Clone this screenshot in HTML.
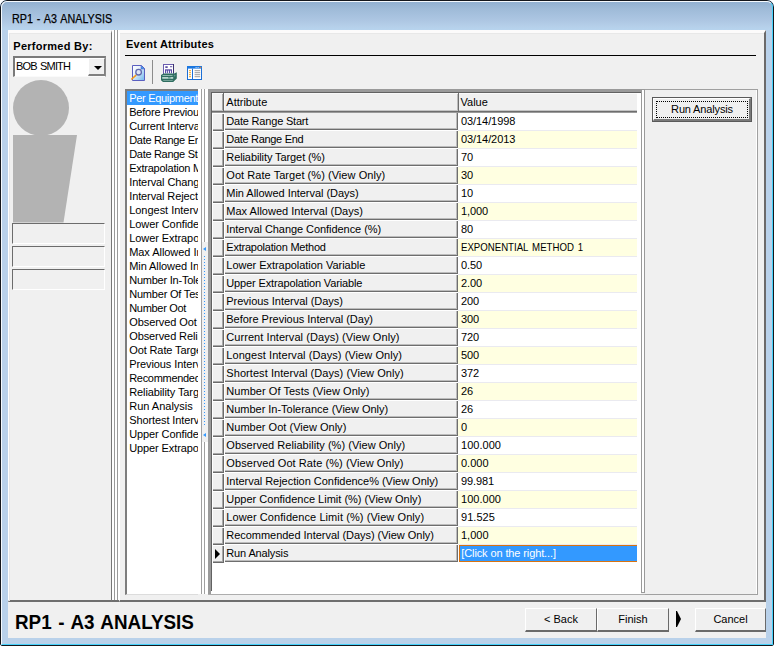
<!DOCTYPE html><html><head><meta charset="utf-8"><title>RP1 - A3 ANALYSIS</title><style>*,*:before,*:after{box-sizing:border-box;margin:0;padding:0}
html,body{width:774px;height:646px;overflow:hidden;background:#fff}
body{font-family:"Liberation Sans",sans-serif;font-size:11px;color:#000;position:relative}
div,svg,b,i,s{position:absolute;display:block}
#win{left:0;top:0;width:774px;height:646px;background:#b9d1ea;border-radius:7px 7px 2px 2px;overflow:hidden}
#tbar{left:0;top:0;width:774px;height:30px;background:linear-gradient(#92b1d1 0,#92b1d1 2px,#9fbbd8 9px,#a6c1de 15px,#aec7e3 21px,#b5cfe9 26px,#b7d4ee 30px)}
#frame{left:0;top:0;width:774px;height:646px;border:1px solid #14171c;border-radius:7px 7px 2px 2px;z-index:5}
#frame2{left:1px;top:1px;width:772px;height:644px;border:1px solid #f4f9fd;border-right-color:#45d2fb;border-bottom-color:#45d2fb;border-radius:6px 6px 1px 1px;z-index:5}
#title{left:12px;top:11px;font-size:13px;line-height:15px;white-space:nowrap;word-spacing:1.2px;-webkit-text-stroke:.25px #000;transform:scaleX(.826);transform-origin:0 0;z-index:6}
#client{left:8px;top:30px;width:758px;height:608px;background:#f0f0f0}
/* left panel */
#left{left:8px;top:30px;width:104px;height:572px;background:#f0f0f0;border-top:3px solid #fcfbfb;box-shadow:inset 0 1px 0 #e8e8e8;border-left:1px solid #fff;border-right:1px solid #777;border-bottom:2px solid #6e6e6e}
#left:before{content:"";position:absolute;left:0;top:0;width:1px;height:568px;background:#e6e6e6}
#perf{left:13.3px;top:39.5px;font-weight:bold;line-height:13px;white-space:nowrap;letter-spacing:.27px}
#combo{left:13px;top:56px;width:93px;height:21px;background:#fff;border:1px solid #7a7a7a;border-top:2px solid #7a7a7a;border-left:2px solid #7a7a7a;border-right-color:#8a8a8a;border-bottom-color:#fafafa}
#combo span{position:absolute;left:1px;top:2px;line-height:13px;white-space:nowrap;letter-spacing:-.85px;word-spacing:1.2px}
#cbtn{right:0;top:0;width:17px;height:18px;background:#f0f0f0;border-top:1px solid #fff;border-left:1px solid #fff;border-right:1px solid #808080;border-bottom:2px solid #808080}
#cbtn i{left:4.5px;top:6.5px;width:0;height:0;border-left:4px solid transparent;border-right:4px solid transparent;border-top:4px solid #000}
#avatar{left:13px;top:80px}
.tb{left:12px;width:93px;height:21px;border-top:1px solid #6c6c6c;border-left:1px solid #6c6c6c;border-right:1px solid #fff;border-bottom:1px solid #fff;background:#f0f0f0}
#split{left:112px;top:30px;width:7px;height:572px;border-bottom:2px solid #6e6e6e;background:linear-gradient(90deg,#fff 0,#fff 2px,#9a9a9a 2px,#9a9a9a 3px,#fff 3px,#fff 5px,#9a9a9a 5px,#9a9a9a 6px,#fff 6px)}
/* right panel */
#right{left:119px;top:30px;width:647px;height:572px;background:#f0f0f0;border-top:3px solid #fcfbfb;box-shadow:inset 0 1px 0 #e8e8e8;border-left:1px solid #fff;border-right:2px solid #6b6969;border-bottom:2px solid #6e6e6e}
#evt{left:126px;top:38px;font-weight:bold;line-height:13px;white-space:nowrap;letter-spacing:.22px}
#hr{left:125px;top:55px;width:631px;height:1px;background:#000}
#icons{left:124px;top:58px}
#list{left:125px;top:89px;width:73px;height:506px;background:#fff;border-left:2px solid #7d7d7d;border-top:2px solid #7d7d7d;border-bottom:1px solid #dcdcdc;overflow:hidden}
.li{position:static;height:14px;line-height:14px;padding-left:2.2px;white-space:nowrap;letter-spacing:-.3px}
.li.sel{background:#3399ff;color:#fff}
#vsplit{left:198px;top:89px;width:10px;height:505px;background:linear-gradient(90deg,#fff 0,#fff 3px,#a0a0a0 3px,#a0a0a0 4px,#fff 4px,#fff 6px,#a0a0a0 6px,#a0a0a0 7px,#fff 7px)}
#vbtn{left:4px;top:153px;width:6px;height:200px;background:#f0f0f0}
#vbtn b{left:1px;width:0;height:0;border-top:2.5px solid transparent;border-bottom:2.5px solid transparent;border-right:3px solid #3399ff}
#vbtn i{left:2px;top:14px;width:1px;height:170px;background:repeating-linear-gradient(#3399ff 0,#3399ff 1px,transparent 1px,transparent 3px)}
/* grid */
#grid{left:208px;top:89px;width:433px;height:506px;background:#fff;border-left:3px solid #9a9a9a;border-top:3px solid #9a9a9a;border-bottom:1px solid #a0a0a0}
#gin{left:0;top:0;width:430px;height:499px;border-left:1px solid #626262;border-top:1px solid #626262}
.rh{left:212px;width:12px;height:18px;background:#f0f0f0;box-shadow:inset 1px 1px 0 #fff,inset -1px -1px 0 #6a6a6a,inset -2px -2px 0 #a8a8a8}
.at{left:224px;width:234px;height:18px;line-height:18px;background:#f0f0f0;padding-left:2.3px;white-space:nowrap;overflow:hidden;box-shadow:inset 1px 1px 0 #fff,inset -1px -1px 0 #6e6e6e,inset -2px -2px 0 #bcbcbc}
.at.hd{width:235px;height:20px;box-shadow:inset 0 -1px 0 #9a9a9a,inset 0 -2px 0 #6e6e6e,inset -1px 0 0 #6e6e6e,inset 0 -3px 0 #c4c4c4,inset 1px 1px 0 #f8f8f8,inset -2px 0 0 #bcbcbc}
.rh.hd{height:20px;box-shadow:inset 0 -1px 0 #9a9a9a,inset 0 -2px 0 #6e6e6e,inset -1px 0 0 #6a6a6a,inset 0 -3px 0 #c4c4c4,inset 1px 1px 0 #f8f8f8,inset -2px 0 0 #a8a8a8}
.va{left:458px;width:179px;height:18px;line-height:16px;background:#fff;padding-left:3px;white-space:nowrap;overflow:hidden;box-shadow:inset 0 -1px 0 #eaeaf0}
.va.alt{background:#ffffe1}
.va.hd{left:459px;width:178px;height:20px;line-height:18px;background:#f0f0f0;padding-left:1.5px;box-shadow:inset 0 1px 0 #fafafa,inset 0 -1px 0 #9a9a9a,inset 0 -2px 0 #6e6e6e,inset 0 -3px 0 #c4c4c4}
.va.cur{left:459px;width:178px;height:17px;line-height:14px;background:#3399ff;color:#fff;border:1px solid #d9730f;border-right:0;padding-left:1.3px;box-shadow:none}
.rh s{left:3px;top:4px;width:0;height:0;border-top:5px solid transparent;border-bottom:5px solid transparent;border-left:5px solid #000}
#gs{left:641px;top:89px;width:4px;height:504px;background:linear-gradient(90deg,#9a9a9a 0,#9a9a9a 1px,#fff 1px,#fff 3px,#9a9a9a 3px);border-bottom:1px solid #9a9a9a;border-top:1px solid #9a9a9a}
#bl{left:208px;top:594px;width:550px;height:1px;background:#adadad}
#rpanel{left:645px;top:89px;width:113px;height:506px;border-top:1px solid #a0a0a0;border-right:1px solid #a0a0a0;border-bottom:1px solid #a0a0a0}
#rpanel:before{content:"";position:absolute;right:0;top:0;width:1px;height:504px;background:#fff}
#runbtn{left:652px;top:97px;width:100px;height:25px;border:1px solid #5a5a5a;background:#f0f0f0}
#runbtn:before{content:"";position:absolute;left:0;top:0;width:98px;height:23px;border-top:1px solid #fff;border-left:1px solid #fff;border-right:2px solid #7a7a7a;border-bottom:2px solid #7a7a7a}
#runbtn:after{content:"";position:absolute;left:3px;top:3px;width:92px;height:17px;border:1px dotted #000}
#runbtn span{position:absolute;left:0;top:5px;width:98px;text-align:center;line-height:13px;letter-spacing:-.15px}
/* bottom */
#btitle{left:14.6px;top:611.2px;font-weight:bold;font-size:21px;line-height:22px;white-space:nowrap;word-spacing:1.5px;transform:scaleX(.897);transform-origin:0 0}
.btn{top:608px;width:72px;height:24px;background:#f0f0f0;border-top:1px solid #fff;border-left:1px solid #fff;border-right:1px solid #6a6a6a;border-bottom:2px solid #6a6a6a;text-align:center;line-height:21px}
#arr{left:676px;top:611px;width:5px;height:16px}
</style></head><body>
<div id="win"><div id="tbar"></div><div id="frame"></div><div id="frame2"></div><div id="title">RP1 - A3 ANALYSIS</div>
<div id="client"></div>
<div id="left"></div><div id="perf">Performed By:</div><div id="combo"><span>BOB SMITH</span><div id="cbtn"><i></i></div></div>
<svg id="avatar" width="66" height="144" viewBox="0 0 66 144"><circle cx="28" cy="28" r="28" fill="#b3b3b3"/><polygon points="0,55 64,55 50.5,142.5 0,142.5" fill="#b3b3b3"/></svg>
<div class="tb" style="top:223px"></div><div class="tb" style="top:246px"></div><div class="tb" style="top:269px"></div>
<div id="split"></div>
<div id="right"></div><div id="evt">Event Attributes</div><div id="hr"></div>
<svg id="icons" width="90" height="28" viewBox="124 58 90 28">
<defs><linearGradient id="pg" x1="0" y1="0" x2="1" y2="1"><stop offset="0" stop-color="#ffffff"/><stop offset="0.35" stop-color="#e9f3fc"/><stop offset="1" stop-color="#6fb7ee"/></linearGradient></defs>
<path d="M132.5 65.5 H141.5 L144.5 68.5 V80.5 H132.5 Z" fill="url(#pg)" stroke="#5a5fc0" stroke-width="1"/>
<path d="M141 65.5 L144.5 69 H141 Z" fill="#3d9bf0" stroke="#5a5fc0" stroke-width="0.5"/>
<line x1="135.8" y1="75.4" x2="131.8" y2="79" stroke="#f59a1b" stroke-width="1.6" stroke-linecap="round"/>
<circle cx="138.6" cy="72.2" r="2.8" fill="#dfe6f6" stroke="#5f68ac" stroke-width="1.3"/>
<rect x="152" y="60" width="1" height="24" fill="#8c8c8c"/>
<rect x="163.5" y="64.5" width="10" height="10" fill="#fff" stroke="#6a5cb0" stroke-width="1"/><rect x="173" y="64" width="1" height="9" fill="#3c3270"/>
<rect x="165.3" y="66.3" width="2.4" height="1.6" fill="#4d3f98"/>
<rect x="170" y="66.3" width="2.2" height="0.9" fill="#4d3f98"/>
<rect x="165" y="69.3" width="7" height="4" fill="#5a4ca6"/>
<rect x="166.2" y="70.6" width="0.9" height="3" fill="#fff"/><rect x="168.1" y="70.6" width="0.9" height="3" fill="#fff"/><rect x="170" y="70.6" width="0.9" height="3" fill="#fff"/>
<path d="M161 75 L163.5 73.5 H174.2 L176.8 72.2 V78.6 L173.2 82 H163 L161 80.2 Z" fill="#2f6d60"/>
<rect x="162.5" y="75.1" width="10" height="0.8" fill="#a9cbc2"/>
<rect x="162.2" y="77" width="11" height="1.8" fill="#b9d4cd"/>
<rect x="168" y="77" width="2.6" height="1.8" fill="#6fa397"/>
<rect x="163.2" y="80.2" width="9.5" height="0.7" fill="#8fb8ae"/>
<circle cx="174.6" cy="75.6" r="0.9" fill="#5f978b"/>
<rect x="187.5" y="66.5" width="14" height="13" fill="#fff" stroke="#1b6fd6" stroke-width="1"/>
<rect x="187" y="66" width="15" height="2.6" fill="#1b77e0"/>
<rect x="195.6" y="67" width="1" height="0.9" fill="#dfeeff"/><rect x="197.6" y="67" width="1" height="0.9" fill="#dfeeff"/><rect x="199.6" y="66.9" width="1.6" height="1" fill="#f0802a"/>
<rect x="192" y="68.6" width="1" height="11" fill="#1b6fd6"/>
<g fill="#f0a21c"><rect x="189" y="70.2" width="2" height="1"/><rect x="189" y="72.2" width="2" height="1"/><rect x="189" y="74.2" width="2" height="1"/><rect x="189" y="76.2" width="2" height="1"/></g>
<g fill="#9a9a9a"><rect x="194.6" y="70.2" width="5.6" height="1"/><rect x="194.6" y="72.2" width="5.6" height="1"/><rect x="194.6" y="74.2" width="5.6" height="1"/><rect x="194.6" y="76.2" width="5.6" height="1"/></g>
</svg>

<div id="list">
<div class="li sel" style="letter-spacing:-0.30px">Per Equipment Analysis</div>
<div class="li" style="letter-spacing:-0.22px">Before Previous Interval</div>
<div class="li" style="letter-spacing:-0.20px">Current Interval</div>
<div class="li" style="letter-spacing:-0.30px">Date Range End</div>
<div class="li" style="letter-spacing:-0.30px">Date Range Start</div>
<div class="li" style="letter-spacing:-0.25px">Extrapolation Method</div>
<div class="li" style="letter-spacing:-0.10px">Interval Change Confidence</div>
<div class="li" style="letter-spacing:-0.11px">Interval Rejection Confidence</div>
<div class="li" style="letter-spacing:-0.03px">Longest Interval</div>
<div class="li" style="letter-spacing:-0.08px">Lower Confidence Limit</div>
<div class="li" style="letter-spacing:-0.07px">Lower Extrapolation Variable</div>
<div class="li" style="letter-spacing:-0.05px">Max Allowed Interval</div>
<div class="li" style="letter-spacing:-0.08px">Min Allowed Interval</div>
<div class="li" style="letter-spacing:-0.23px">Number In-Tolerance</div>
<div class="li" style="letter-spacing:-0.20px">Number Of Tests</div>
<div class="li" style="letter-spacing:-0.30px">Number Oot</div>
<div class="li" style="letter-spacing:-0.07px">Observed Oot Rate</div>
<div class="li" style="letter-spacing:-0.09px">Observed Reliability</div>
<div class="li" style="letter-spacing:-0.11px">Oot Rate Target</div>
<div class="li" style="letter-spacing:-0.09px">Previous Interval</div>
<div class="li" style="letter-spacing:-0.30px">Recommended Interval</div>
<div class="li" style="letter-spacing:-0.10px">Reliability Target</div>
<div class="li" style="letter-spacing:0.00px">Run Analysis</div>
<div class="li" style="letter-spacing:-0.10px">Shortest Interval</div>
<div class="li" style="letter-spacing:-0.10px">Upper Confidence Limit</div>
<div class="li" style="letter-spacing:-0.10px">Upper Extrapolation Variable</div>
</div>
<div id="vsplit"><div id="vbtn"><b style="top:5px"></b><i></i><b style="top:191px"></b></div></div>
<div id="grid"><div id="gin"></div></div>
<div class="rh" style="top:113px"></div><div class="at" style="top:112px"><span style="letter-spacing:-0.193px">Date Range Start</span></div><div class="va" style="top:113px"><span style="letter-spacing:-0.078px">03/14/1998</span></div>
<div class="rh" style="top:131px"></div><div class="at" style="top:130px"><span style="letter-spacing:-0.308px">Date Range End</span></div><div class="va alt" style="top:131px"><span style="letter-spacing:-0.078px">03/14/2013</span></div>
<div class="rh" style="top:149px"></div><div class="at" style="top:148px"><span style="letter-spacing:-0.095px">Reliability Target (%)</span></div><div class="va" style="top:149px"><span style="letter-spacing:-0.100px">70</span></div>
<div class="rh" style="top:167px"></div><div class="at" style="top:166px"><span style="letter-spacing:0.050px">Oot Rate Target (%) (View Only)</span></div><div class="va alt" style="top:167px"><span style="letter-spacing:-0.100px">30</span></div>
<div class="rh" style="top:185px"></div><div class="at" style="top:184px"><span style="letter-spacing:-0.035px">Min Allowed Interval (Days)</span></div><div class="va" style="top:185px"><span style="letter-spacing:-0.100px">10</span></div>
<div class="rh" style="top:203px"></div><div class="at" style="top:202px"><span style="letter-spacing:0.012px">Max Allowed Interval (Days)</span></div><div class="va alt" style="top:203px"><span style="letter-spacing:-0.125px">1,000</span></div>
<div class="rh" style="top:221px"></div><div class="at" style="top:220px"><span style="letter-spacing:-0.059px">Interval Change Confidence (%)</span></div><div class="va" style="top:221px"><span style="letter-spacing:-0.100px">80</span></div>
<div class="rh" style="top:239px"></div><div class="at" style="top:238px"><span style="letter-spacing:-0.226px">Extrapolation Method</span></div><div class="va alt" style="top:239px"><span style="display:inline-block;transform:scaleX(.876);transform-origin:0 50%;word-spacing:1.5px">EXPONENTIAL METHOD 1</span></div>
<div class="rh" style="top:257px"></div><div class="at" style="top:256px"><span style="letter-spacing:-0.030px">Lower Extrapolation Variable</span></div><div class="va" style="top:257px"><span style="letter-spacing:-0.067px">0.50</span></div>
<div class="rh" style="top:275px"></div><div class="at" style="top:274px"><span style="letter-spacing:-0.137px">Upper Extrapolation Variable</span></div><div class="va alt" style="top:275px"><span style="letter-spacing:-0.067px">2.00</span></div>
<div class="rh" style="top:293px"></div><div class="at" style="top:292px"><span style="letter-spacing:-0.035px">Previous Interval (Days)</span></div><div class="va" style="top:293px"><span style="letter-spacing:-0.100px">200</span></div>
<div class="rh" style="top:311px"></div><div class="at" style="top:310px"><span style="letter-spacing:-0.021px">Before Previous Interval (Day)</span></div><div class="va alt" style="top:311px"><span style="letter-spacing:-0.100px">300</span></div>
<div class="rh" style="top:329px"></div><div class="at" style="top:328px"><span style="letter-spacing:0.062px">Current Interval (Days) (View Only)</span></div><div class="va" style="top:329px"><span style="letter-spacing:-0.100px">720</span></div>
<div class="rh" style="top:347px"></div><div class="at" style="top:346px"><span style="letter-spacing:0.065px">Longest Interval (Days) (View Only)</span></div><div class="va alt" style="top:347px"><span style="letter-spacing:-0.100px">500</span></div>
<div class="rh" style="top:365px"></div><div class="at" style="top:364px"><span style="letter-spacing:0.063px">Shortest Interval (Days) (View Only)</span></div><div class="va" style="top:365px"><span style="letter-spacing:-0.100px">372</span></div>
<div class="rh" style="top:383px"></div><div class="at" style="top:382px"><span style="letter-spacing:0.046px">Number Of Tests (View Only)</span></div><div class="va alt" style="top:383px"><span style="letter-spacing:-0.100px">26</span></div>
<div class="rh" style="top:401px"></div><div class="at" style="top:400px"><span style="letter-spacing:-0.020px">Number In-Tolerance (View Only)</span></div><div class="va" style="top:401px"><span style="letter-spacing:-0.100px">26</span></div>
<div class="rh" style="top:419px"></div><div class="at" style="top:418px"><span style="letter-spacing:0.019px">Number Oot (View Only)</span></div><div class="va alt" style="top:419px"><span>0</span></div>
<div class="rh" style="top:437px"></div><div class="at" style="top:436px"><span style="letter-spacing:0.034px">Observed Reliability (%) (View Only)</span></div><div class="va" style="top:437px"><span style="letter-spacing:0.033px">100.000</span></div>
<div class="rh" style="top:455px"></div><div class="at" style="top:454px"><span style="letter-spacing:0.078px">Observed Oot Rate (%) (View Only)</span></div><div class="va alt" style="top:455px"><span>0.000</span></div>
<div class="rh" style="top:473px"></div><div class="at" style="top:472px"><span style="letter-spacing:-0.029px">Interval Rejection Confidence% (View Only)</span></div><div class="va" style="top:473px"><span style="letter-spacing:-0.100px">99.981</span></div>
<div class="rh" style="top:491px"></div><div class="at" style="top:490px"><span style="letter-spacing:0.005px">Upper Confidence Limit (%) (View Only)</span></div><div class="va alt" style="top:491px"><span style="letter-spacing:0.033px">100.000</span></div>
<div class="rh" style="top:509px"></div><div class="at" style="top:508px"><span style="letter-spacing:0.081px">Lower Confidence Limit (%) (View Only)</span></div><div class="va" style="top:509px"><span style="letter-spacing:0.040px">91.525</span></div>
<div class="rh" style="top:527px"></div><div class="at" style="top:526px"><span style="letter-spacing:-0.032px">Recommended Interval (Days) (View Only)</span></div><div class="va alt" style="top:527px"><span>1,000</span></div>
<div class="rh" style="top:545px"><s></s></div><div class="at" style="top:544px"><span style="letter-spacing:-0.136px">Run Analysis</span></div><div class="va cur" style="top:545px"><span style="letter-spacing:-0.114px">[Click on the right...]</span></div>
<div class="rh hd" style="top:93px"></div><div class="at hd" style="top:93px">Attribute</div><div class="va hd" style="top:93px">Value</div>
<div id="gs"></div><div id="bl"></div>
<div id="rpanel"></div><div id="runbtn"><span>Run Analysis</span></div>
<div id="btitle">RP1 - A3 ANALYSIS</div><div class="btn" style="left:525px">&lt; Back</div><div class="btn" style="left:597px">Finish</div><svg id="arr" viewBox="0 0 5 16"><path d="M0 0 L1 0 L5 8 L1 16 L0 16 Z" fill="#000"/></svg><div class="btn" style="left:695px;width:71px">Cancel</div>
</div></body></html>
